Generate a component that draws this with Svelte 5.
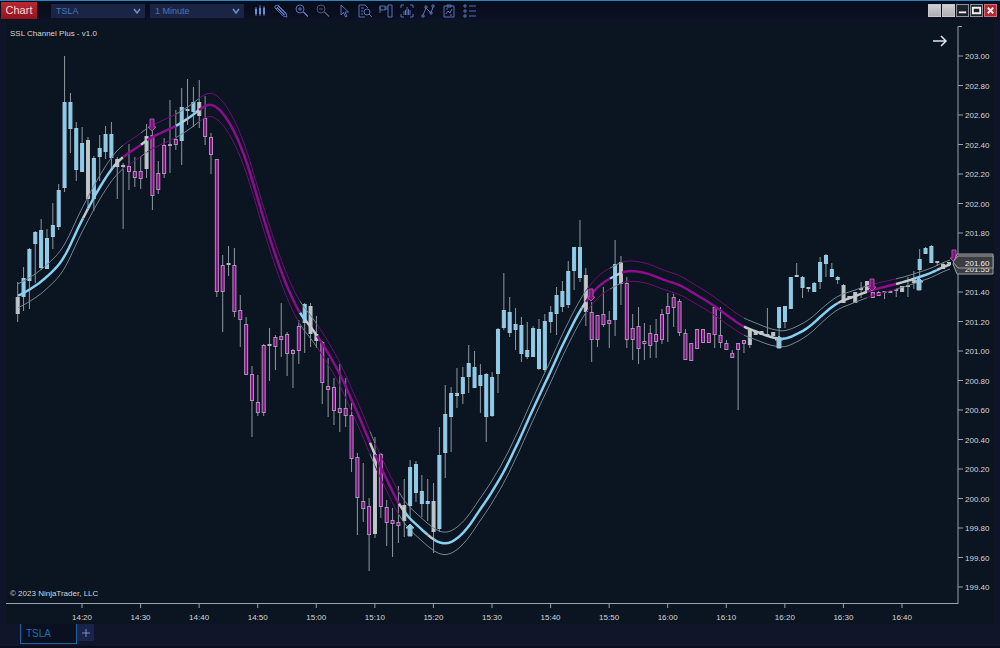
<script>
let symbol = 'TSLA';
let interval = '1 Minute';

// one row per minute: colour, high, body top, body bottom, low
// b = above channel, p = below channel, g = inside channel
const bars = `
g 282 297 314 322|b 267 278 297 311|b 248 249 281 309|b 231 232 244 283|b 219 230 268 270|b 229 238 269 269
b 203 225 237 249|b 184 190 227 230|b 56 102 188 192|b 93 102 129 153|b 122 128 170 181|b 127 143 172 172
g 137 140 199 208|b 156 158 199 211|b 135 148 157 181|b 126 134 152 159|b 122 134 158 169|g 157 159 167 199
g 163 166 167 229|p 144 166 172 190|p 157 171 178 187|p 156 171 179 189|g 124 136 169 178|p 130 135 196 210
p 161 173 190 194|p 138 145 174 178|p 100 144 146 173|p 110 139 145 150|b 88 107 141 165|g 79 110 110 125
b 87 102 112 127|g 80 102 116 128|p 96 118 137 145|p 133 137 155 174|p 159 159 292 297|p 255 265 292 332
g 246 264 264 276|p 248 265 312 317|p 295 310 320 347|p 317 324 375 375|p 366 374 401 437|p 375 402 413 416
p 344 345 413 416|g 328 345 345 381|p 335 337 347 370|p 303 336 340 357|p 332 334 354 376|p 349 350 354 388
p 320 326 351 364|b 303 304 323 353|g 303 306 334 347|g 316 334 341 348|p 341 342 383 404|p 358 386 390 417
p 378 387 411 425|p 364 408 413 432|p 378 408 416 427|p 403 415 459 472|p 453 457 498 535|p 463 501 509 522
p 498 506 535 571|g 437 454 534 538|p 453 454 507 518|p 500 507 523 546|p 508 520 524 557|p 486 522 526 543
g 479 505 521 537|b 460 467 506 517|b 461 464 493 502|b 475 491 504 517|b 479 501 504 521|g 483 501 532 553
b 427 455 529 532|b 385 414 453 478|b 387 393 417 452|b 368 393 396 408|b 367 377 394 404|b 345 363 377 393
b 351 367 388 388|b 364 375 386 413|b 373 374 417 442|b 372 377 416 417|b 328 329 374 393|b 273 310 328 330
b 297 312 333 337|b 308 324 330 350|b 317 325 354 362|b 322 350 357 359|b 326 328 357 357|b 319 329 369 370
b 314 321 370 372|b 306 312 322 333|b 287 295 314 335|b 281 291 307 312|b 261 271 305 308|b 247 247 271 290
b 220 247 278 282|g 268 275 312 326|p 302 312 340 362|p 315 315 340 347|p 287 314 325 327|p 311 320 324 348
b 240 264 320 336|g 256 262 284 305|p 277 283 340 348|p 314 328 340 360|p 307 326 349 364|p 323 341 344 360
p 325 333 346 358|p 319 334 342 358|p 309 314 340 344|p 293 306 314 342|p 294 297 308 327|p 299 301 333 336
p 329 333 360 360|p 343 343 361 361|p 329 329 349 349|p 329 329 343 343|p 333 333 343 343|p 307 307 335 348
p 307 335 343 348|p 340 343 350 350|p 350 353 358 358|p 343 343 350 410|p 340 340 344 353|g 328 330 345 348
g 332 332 335 335|g 331 331 335 335|g 308 335 335 336|g 332 332 336 336|b 307 307 328 347|b 306 306 322 328
b 277 277 309 309|g 263 275 277 277|b 276 277 288 298|b 287 288 288 292|b 282 283 292 292|b 257 262 282 289
b 254 255 264 277|b 263 269 277 277|b 276 277 280 284|g 284 285 303 303|g 296 296 299 299|g 292 292 303 303
g 282 289 289 298|g 281 281 292 292|p 292 292 298 298|p 291 292 296 296|p 291 291 293 299|p 291 291 293 293
p 289 289 291 297|g 286 286 292 292|g 277 286 286 297|g 271 280 283 289|b 249 259 270 278|b 247 248 254 254
b 245 246 263 263|g 262 262 262 266|g 263 264 269 269|g 262 262 265 265`
  .trim()
  .split(/[|\n]/)
  .map((row, i) => {
    const [c, ...v] = row.split(' ');
    const [high, top, bottom, low] = v.map(Number);
    return { c, high, top, bottom, low, x: 17.7 + i * 5.857 };
  });

const average = [
  [12, 298], [18, 296], [29, 290], [41, 282], [53, 271], [59, 265], [65, 256], [71, 244], [77, 230], [83, 218],
  [88, 209], [94, 197], [100, 187], [106, 177], [111, 170], [117, 162], [123, 157], [130, 152], [141, 145], [148, 139],
  [165, 131], [176, 126], [181, 123], [187, 119], [193, 115], [199, 110], [204, 106], [210, 104], [216, 106], [222, 112],
  [228, 120], [234, 131], [240, 144], [246, 160], [252, 179], [258, 200], [264, 220], [270, 239], [276, 257], [282, 274],
  [288, 289], [294, 302], [299, 312], [305, 320], [311, 327], [317, 336], [322, 343], [328, 353], [334, 363], [340, 374],
  [346, 387], [352, 401], [358, 414], [364, 428], [370, 443], [376, 457], [382, 470], [388, 482], [393, 493], [399, 504],
  [405, 513], [411, 520], [417, 525], [422, 530], [428, 535], [434, 540], [440, 543], [446, 544], [452, 542], [458, 538],
  [464, 532], [470, 525], [475, 517], [481, 508], [487, 500], [493, 490], [499, 480], [505, 470], [510, 459], [516, 447],
  [522, 434], [528, 420], [534, 407], [540, 394], [546, 381], [552, 369], [557, 357], [563, 344], [569, 332], [575, 320],
  [581, 309], [587, 300], [593, 292], [599, 286], [605, 281], [611, 278], [617, 275], [622, 272], [628, 271], [634, 271],
  [646, 273], [652, 275], [664, 280], [680, 285], [690, 291], [700, 297], [710, 303], [720, 310], [732, 319], [744, 327],
  [755, 331], [767, 336], [779, 339], [785, 339], [791, 337], [797, 334], [803, 331], [809, 327], [815, 322], [821, 316],
  [827, 311], [833, 306], [839, 302], [850, 298], [861, 294], [872, 290], [880, 288], [896, 284], [907, 281], [919, 277],
  [931, 273], [943, 267], [949, 265], [956, 262]
];

const spread = [[0, 12], [580, 11], [640, 10], [785, 8], [900, 5], [1000, 4]];

// colour of the average up to each x
const runs = [
  ['b', 83], ['g', 88], ['b', 113], ['g', 123], ['p', 141], ['g', 147], ['p', 176], ['b', 181], ['g', 187], ['b', 196],
  ['g', 199], ['p', 300], ['b', 305], ['g', 317], ['p', 370], ['g', 375], ['p', 399], ['g', 405], ['b', 428], ['g', 434],
  ['b', 582], ['g', 586], ['p', 610], ['b', 615], ['g', 622], ['p', 744], ['g', 779], ['b', 838], ['g', 867], ['p', 896],
  ['g', 914], ['b', 937], ['g', 950]
];

let at = (table, x) => {
  let i = 1;
  while (i < table.length - 1 && table[i][0] < x) i++;
  const [x0, y0] = table[i - 1];
  const [x1, y1] = table[i];
  return y0 + ((y1 - y0) * (x - x0)) / (x1 - x0);
};

let smooth = (x) => (at(average, x - 4) + at(average, x) + at(average, x + 4)) / 3;

let line = (from, to, side) => {
  const pts = [];
  for (let x = from; x < to; x += 3) pts.push(x);
  pts.push(to);
  return pts.map((x) => `${x},${(smooth(x) + side * at(spread, x)).toFixed(1)}`).join(' ');
};

const channel = runs.map(([c, to], i) => ({ c, to, from: i ? runs[i - 1][1] : 18 }));

const signals = [
  { x: 152, y: 131, c: 'p' },
  { x: 591, y: 301, c: 'p' },
  { x: 872, y: 291, c: 'p' },
  { x: 954, y: 262, c: 'p' },
  { x: 410, y: 524, c: 'b' },
  { x: 779, y: 336, c: 'b' },
  { x: 919, y: 278, c: 'b' }
];

const prices = Array.from({ length: 19 }, (_, i) => ({ label: (203 - i * 0.2).toFixed(2), y: 56 + i * 29.5 }));

const times = Array.from({ length: 15 }, (_, i) => {
  const m = 20 + i * 10;
  return { label: `${14 + Math.floor(m / 60)}:${String(m % 60).padStart(2, '0')}`, x: 82 + i * 58.57 };
});

const tools = [
  { name: 'Chart style', d: 'M3 3v9M7 1v11M11 2v10', bars: true },
  { name: 'Drawing tools', d: 'M1 2l3-1 8 8 1 4-4-1-8-8zM3 4l7 7M5 3l7 7M4 4l7 7M2 5l3-3' },
  { name: 'Zoom in', d: 'M5 1a4 4 0 1 0 0 8a4 4 0 1 0 0-8M8 8l5 5M9 8l4 4M5 3v4M3 5h4' },
  { name: 'Zoom out', d: 'M5 1a4 4 0 1 0 0 8a4 4 0 1 0 0-8M8 8l5 5M9 8l4 4M3 5h4', dim: true },
  { name: 'Cursor', d: 'M4 1v10l2.500-2.500 2 4.500 1.500-.7-2-4.300h3.500z' },
  { name: 'Data box', d: 'M7 13H1V1h6l3 3M3 4h3M3 7h2M3 10h2M9 5a3 3 0 1 0 0 6a3 3 0 1 0 0-6M11 10l3 3' },
  { name: 'Chart trader', d: 'M9 1h4v12H9zM1 2h5v4H1zM6 3h3M6 5h3M1 2v7' },
  { name: 'Data series', d: 'M1 4V1h3M10 1h3v3M1 10v3h3M10 13h3v-3M4 7v4M7 3v8M10 6v5M5.500 6v5M8.500 5v6' },
  { name: 'Indicators', d: 'M2 11l3-7 5 5 2-6M1 11h2v2H1zM4 2h2v2H4zM9 8h2v2H9zM11 1h2v2h-2z' },
  { name: 'Strategies', d: 'M2 2h10v11H2zM5 1h4v2H5zM4 10l2-3 2 2 2-4M4 5h2M8 11h2' },
  { name: 'Properties', d: 'M1 1h2v2H1zM1 6h2v2H1zM1 11h2v2H1zM6 2h7M6 7h7M6 12h7' }
];
</script>

<main class="window">
  <header class="titlebar">
    <h1>Chart</h1>
    <label class="picker">
      <select bind:value={symbol} aria-label="Instrument">
        <option>TSLA</option>
      </select>
      <svg viewBox="0 0 8 6"><path d="M1 1l3 4 3-4"></path></svg>
    </label>
    <label class="picker">
      <select bind:value={interval} aria-label="Interval">
        <option>1 Minute</option>
      </select>
      <svg viewBox="0 0 8 6"><path d="M1 1l3 4 3-4"></path></svg>
    </label>
    <nav class="tools">
      {#each tools as tool}
        <button class="tool" class:dim={tool.dim} aria-label={tool.name}>
          <svg viewBox="0 0 14 14">
            <path d={tool.d}></path>
            {#if tool.bars}
              <path class="solid" d="M2.500 5h1v5h-1zM6.500 4h1v6h-1zM10.500 4h1v6h-1z"></path>
            {/if}
          </svg>
        </button>
      {/each}
    </nav>
    <div class="controls">
      <button class="control plain" aria-label="Link instrument"></button>
      <button class="control plain" aria-label="Link interval"></button>
      <button class="control dark" aria-label="Minimize">
        <svg viewBox="0 0 12 12"><path d="M2 8h8"></path></svg>
      </button>
      <button class="control dark" aria-label="Maximize">
        <svg viewBox="0 0 12 12"><path d="M2 3h8v6H2z"></path></svg>
      </button>
      <button class="control close" aria-label="Close">
        <svg viewBox="0 0 12 12"><path d="M3 3l6 6M9 3l-6 6"></path></svg>
      </button>
    </div>
  </header>

  <section class="panel">
    <svg class="chart" viewBox="6 22 988 602">
      <g class="axis">
        <path d="M6 603.500H958M958 604V26.500h4"></path>
        {#each prices as p}
          <path d="M958 {p.y}h5"></path>
          <text x="965" y={p.y + 3}>{p.label}</text>
        {/each}
        {#each times as t}
          <path d="M{t.x} 604v4"></path>
          <text x={t.x} y="620" text-anchor="middle">{t.label}</text>
        {/each}
      </g>

      {#each bars as b}
        <g class="bar {b.c}">
          <path d="M{b.x} {b.high}V{b.low}"></path>
          {#if b.bottom - b.top < 2}
            <path class="doji" d="M{b.x - 2} {b.top}h4"></path>
          {:else}
            <rect x={b.x - 1.5} y={b.top + 0.5} width="3" height={b.bottom - b.top - 1}></rect>
          {/if}
        </g>
      {/each}

      {#each channel as s}
        <polyline class="band {s.c}" points={line(s.from, s.to, -1)}></polyline>
        <polyline class="band {s.c}" points={line(s.from, s.to, 1)}></polyline>
        <polyline class="average {s.c}" points={line(s.from, s.to, 0)}></polyline>
      {/each}

      {#each signals as s}
        <path class="signal {s.c}" transform="translate({s.x} {s.y})" d={s.c == 'p' ? 'M0 0l-4-4h2v-8h4v8h2z' : 'M0 0l-4 4h2v8h4v-8h2z'}></path>
      {/each}

      <g class="tag">
        <path d="M953 264l4-10h36v20h-36z"></path>
        <text x="965" y="272">201.55</text>
        <path d="M953 262l5-6h35v12h-35z"></path>
        <text x="965" y="266">201.60</text>
      </g>

      <text x="10" y="36">SSL Channel Plus - v1.0</text>
      <text x="10" y="596">© 2023 NinjaTrader, LLC</text>
      <path class="follow" d="M933 41h13M941 36l5 5-5 5"></path>
    </svg>
  </section>

  <footer class="tabs">
    <button class="tab">TSLA</button>
    <button class="add" aria-label="Add tab">
      <svg viewBox="0 0 8 8"><path d="M4 0v8M0 4h8"></path></svg>
    </button>
  </footer>
</main>

<style>
:global(body) {
  margin: 0;
  background: #10152a;
}

.window {
  min-height: 100vh;
  display: flex;
  flex-direction: column;
  box-sizing: border-box;
  background: #10152a;
  font-family: "Liberation Sans", Arial, sans-serif;
  border-bottom: 2px solid #080c1c;
}

button, select {
  font-family: inherit;
  border: 0;
  padding: 0;
  margin: 0;
}

svg {
  display: block;
  fill: none;
}

.titlebar {
  display: flex;
  align-items: center;
  height: 22px;
  box-sizing: border-box;
  padding: 0 3px 2px 1px;
  border-top: 1px solid #2c86bd;
  background: linear-gradient(#070c1c, #0a1021 70%, #0d1425);
}

h1 {
  margin: 0 14px 0 0;
  width: 36px;
  line-height: 17px;
  background: linear-gradient(#bb2832, #94121d);
  color: #f0dcdf;
  font-size: 11px;
  font-weight: normal;
  text-align: center;
}

.picker {
  display: grid;
  align-items: center;
  width: 94px;
  margin-right: 5px;
}

.picker select, .picker svg {
  grid-area: 1 / 1;
}

.picker select {
  appearance: none;
  height: 14px;
  padding-left: 5px;
  background: #1a2444;
  color: #4d74b2;
  font-size: 9px;
}

.picker svg {
  justify-self: end;
  width: 8px;
  height: 6px;
  margin-right: 4px;
  pointer-events: none;
  stroke: #6f8fd0;
  stroke-width: 1.5;
}

.tools {
  display: flex;
  gap: 7px;
  margin-left: 4px;
}

.tool {
  background: none;
}

.tool svg {
  width: 14px;
  height: 14px;
  stroke: #5671b4;
  stroke-width: 1;
}

.tool .solid {
  fill: #6c8ad8;
  stroke: #6c8ad8;
}

.dim svg {
  stroke: #4d5571;
}

.controls {
  display: flex;
  gap: 1px;
  margin-left: auto;
}

.control {
  width: 13px;
  height: 13px;
  box-sizing: border-box;
  border: 1px solid #8e949c;
}

.control svg {
  width: 11px;
  height: 11px;
  stroke: #f2f2f2;
  stroke-width: 2;
}

.plain {
  border-color: #c8c8cc;
  background: linear-gradient(#cfcfd2, #adadb2);
}

.dark {
  background: #1b222b;
}

.close {
  border-color: #c87078;
  background: #b52630;
}

.panel {
  padding: 0 6px;
}

.chart {
  width: 100%;
  background: #0b1421;
}

.chart text {
  fill: #d2d6da;
  font-size: 8px;
}

.axis path {
  stroke: #9aa1aa;
}

.bar path {
  stroke: #8f989f;
}

.bar .doji {
  stroke: #b4babd;
  stroke-width: 2;
}

.bar rect {
  stroke: #b9c3c8;
}

.bar.b rect {
  fill: #86cdf0;
  stroke: #9fcbdf;
}

.bar.g rect {
  fill: #c4c6c6;
}

.bar.p rect {
  fill: #8d0a8d;
  stroke: #b092b8;
}

.band {
  stroke: #74868f;
  stroke-width: 1;
}

.band.p {
  stroke: #720c76;
}

.average {
  stroke-width: 2.5;
  stroke: #c4c9cc;
}

.average.b {
  stroke: #86d0f2;
}

.average.p {
  stroke: #8d0c90;
}

.signal {
  fill: #8bcbe8;
  stroke: #9fbfcd;
}

.signal.p {
  fill: #860d86;
  stroke: #a2599f;
}

.tag path {
  fill: #3b3d42;
  stroke: #9b9fa4;
}

.chart .tag text {
  fill: #f0f0f0;
}

.follow {
  stroke: #dfe3e6;
  stroke-width: 1.5;
}

.tabs {
  display: flex;
  align-items: flex-start;
  padding: 0 20px;
}

.tab {
  width: 57px;
  height: 20px;
  box-sizing: border-box;
  padding-left: 5px;
  border: 1px solid #1b669f;
  border-top: 0;
  background: #0a1020;
  color: #1b6fb3;
  font-size: 10px;
  text-align: left;
}

.add {
  display: grid;
  place-items: center;
  width: 17px;
  height: 17px;
  background: #1a2348;
}

.add svg {
  width: 8px;
  height: 8px;
  stroke: #7c8cd0;
  stroke-width: 1;
}
</style>
